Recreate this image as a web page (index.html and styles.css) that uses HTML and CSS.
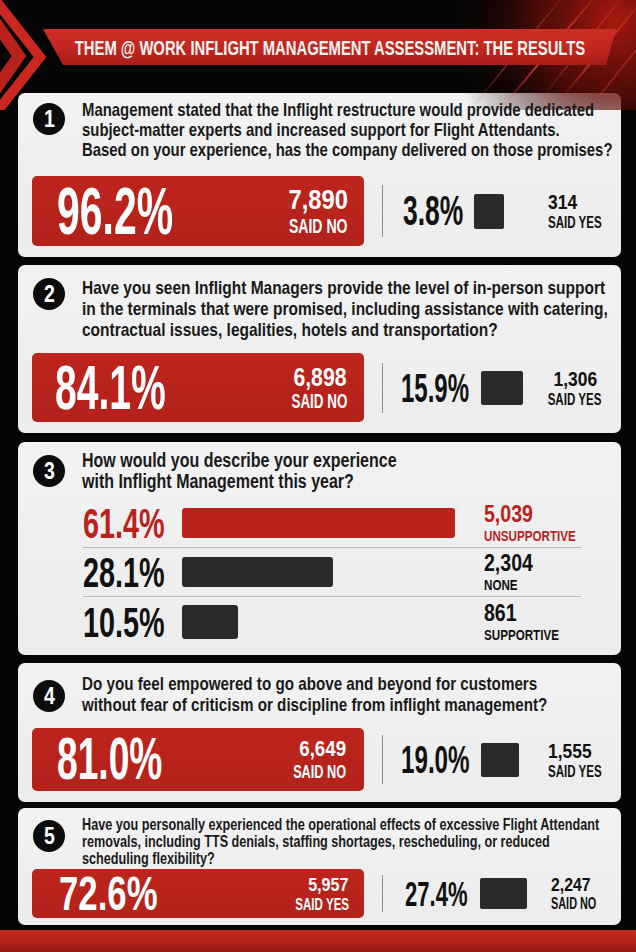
FILE: index.html
```html
<!DOCTYPE html>
<html lang="en">
<head>
<meta charset="utf-8">
<title>Them @ Work Inflight Management Assessment</title>
<link rel="stylesheet" href="styles.css">
</head>
<body>
<div class="page">
  <header class="hero">
    <svg class="decor" width="636" height="110" viewBox="0 0 636 110" aria-hidden="true">
      <defs>
        <radialGradient id="glow" cx="615" cy="20" r="170" gradientUnits="userSpaceOnUse">
          <stop offset="0" stop-color="#b01a10" stop-opacity="0.95"/>
          <stop offset="0.45" stop-color="#650d08" stop-opacity="0.75"/>
          <stop offset="1" stop-color="#000" stop-opacity="0"/>
        </radialGradient>
        <linearGradient id="streak" x1="0" y1="1" x2="1" y2="0">
          <stop offset="0" stop-color="#ff3a2a" stop-opacity="0"/>
          <stop offset="0.5" stop-color="#ff6050" stop-opacity="0.95"/>
          <stop offset="1" stop-color="#ff3a2a" stop-opacity="0.25"/>
        </linearGradient>
      </defs>
      <rect x="380" y="0" width="256" height="110" fill="url(#glow)"/>
      <line x1="560" y1="0" x2="470" y2="110" stroke="url(#streak)" stroke-width="1.5" opacity="0.6"/>
      <line x1="592" y1="0" x2="500" y2="110" stroke="url(#streak)" stroke-width="2" opacity="0.85"/>
      <line x1="620" y1="0" x2="540" y2="100" stroke="url(#streak)" stroke-width="1.2" opacity="0.75"/>
      <line x1="636" y1="8" x2="560" y2="100" stroke="url(#streak)" stroke-width="2.5" opacity="0.65"/>
      <line x1="636" y1="50" x2="600" y2="95" stroke="#ff4a38" stroke-width="1.2" opacity="0.5"/>
      <polyline points="-8,-4 40,57 -8,118" fill="none" stroke="#c9271f" stroke-width="10"/>
      <polyline points="-12,12 19,56 -12,100" fill="none" stroke="#b8221b" stroke-width="12"/>
    </svg>
    <div class="ribbon"><h1 class="title">THEM @ WORK INFLIGHT MANAGEMENT ASSESSMENT: THE RESULTS</h1></div>
  </header>

  <main class="cards">
    <section class="card c1">
      <div class="q">
        <span class="badge"><span>1</span></span>
        <p class="qt">Management stated that the Inflight restructure would provide dedicated<br>subject-matter experts and increased support for Flight Attendants.<br>Based on your experience, has the company delivered on those promises?</p>
      </div>
      <div class="result">
        <div class="major">
          <span class="bigwrap"><span class="big">96.2%</span></span>
          <div class="rcount"><b>7,890</b><small>SAID NO</small></div>
        </div>
        <div class="sepcol"><span class="sep"></span></div>
        <div class="minor"><span class="mpct">3.8%</span></div>
        <div class="sqcol"><span class="sq"></span></div>
        <div class="dcount"><b>314</b><small>SAID YES</small></div>
      </div>
    </section>

    <section class="card c2">
      <div class="q">
        <span class="badge"><span>2</span></span>
        <p class="qt">Have you seen Inflight Managers provide the level of in-person support<br>in the terminals that were promised, including assistance with catering,<br>contractual issues, legalities, hotels and transportation?</p>
      </div>
      <div class="result">
        <div class="major">
          <span class="bigwrap"><span class="big">84.1%</span></span>
          <div class="rcount"><b>6,898</b><small>SAID NO</small></div>
        </div>
        <div class="sepcol"><span class="sep"></span></div>
        <div class="minor"><span class="mpct">15.9%</span></div>
        <div class="sqcol"><span class="sq"></span></div>
        <div class="dcount"><b>1,306</b><small>SAID YES</small></div>
      </div>
    </section>

    <section class="card c3">
      <div class="q">
        <span class="badge"><span>3</span></span>
        <p class="qt">How would you describe your experience<br>with Inflight Management this year?</p>
      </div>
      <div class="rows">
        <div class="row red">
          <span class="rpct">61.4%</span>
          <span class="track"><span class="bar" style="width:273px"></span></span>
          <span class="rlabel"><b>5,039</b><small>UNSUPPORTIVE</small></span>
        </div>
        <div class="row">
          <span class="rpct">28.1%</span>
          <span class="track"><span class="bar" style="width:151px"></span></span>
          <span class="rlabel"><b>2,304</b><small>NONE</small></span>
        </div>
        <div class="row last">
          <span class="rpct">10.5%</span>
          <span class="track"><span class="bar tall" style="width:56px"></span></span>
          <span class="rlabel"><b>861</b><small>SUPPORTIVE</small></span>
        </div>
      </div>
    </section>

    <section class="card c4">
      <div class="q">
        <span class="badge"><span>4</span></span>
        <p class="qt">Do you feel empowered to go above and beyond for customers<br>without fear of criticism or discipline from inflight management?</p>
      </div>
      <div class="result">
        <div class="major">
          <span class="bigwrap"><span class="big">81.0%</span></span>
          <div class="rcount"><b>6,649</b><small>SAID NO</small></div>
        </div>
        <div class="sepcol"><span class="sep"></span></div>
        <div class="minor"><span class="mpct">19.0%</span></div>
        <div class="sqcol"><span class="sq"></span></div>
        <div class="dcount"><b>1,555</b><small>SAID YES</small></div>
      </div>
    </section>

    <section class="card c5">
      <div class="q">
        <span class="badge"><span>5</span></span>
        <p class="qt">Have you personally experienced the operational effects of excessive Flight Attendant<br>removals, including TTS denials, staffing shortages, rescheduling, or reduced<br>scheduling flexibility?</p>
      </div>
      <div class="result">
        <div class="major">
          <span class="bigwrap"><span class="big">72.6%</span></span>
          <div class="rcount"><b>5,957</b><small>SAID YES</small></div>
        </div>
        <div class="sepcol"><span class="sep"></span></div>
        <div class="minor"><span class="mpct">27.4%</span></div>
        <div class="sqcol"><span class="sq"></span></div>
        <div class="dcount"><b>2,247</b><small>SAID NO</small></div>
      </div>
    </section>
  </main>

  <footer class="band"></footer>
</div>
</body>
</html>
```

FILE: styles.css
```css
* { box-sizing: border-box; }

html, body {
  margin: 0;
  padding: 0;
  background: #050505;
}

body {
  width: 636px;
  height: 952px;
  overflow: hidden;
  font-family: "Liberation Sans", Arial, sans-serif;
  color: #161616;
}

.page {
  width: 636px;
  height: 952px;
  display: flex;
  flex-direction: column;
  background: #050505;
}

/* ---------- header ---------- */
.hero {
  position: relative;
  height: 93px;
  padding-top: 29px;
  flex-shrink: 0;
}

.decor {
  position: absolute;
  left: 0;
  top: 0;
  z-index: 0;
}

.ribbon {
  position: relative;
  z-index: 1;
  margin-left: 43px;
  width: 573px;
  height: 36px;
  background: linear-gradient(180deg, #cc2e25 0%, #c0261f 55%, #a91e18 100%);
  clip-path: polygon(0 0, 100% 0, calc(100% - 10px) 100%, 20px 100%);
  display: flex;
  align-items: center;
  justify-content: center;
}

.title {
  margin: 0;
  flex-shrink: 0;
  font-size: 21px;
  line-height: 1;
  font-weight: 700;
  color: #fbf3f0;
  white-space: nowrap;
  transform: scaleX(0.705);
  transform-origin: center center;
}

/* ---------- cards ---------- */
.cards {
  display: flex;
  flex-direction: column;
  padding: 0 15px 0 18px;
}

.card {
  background: linear-gradient(180deg, #f2f2f2 0%, #ececec 100%);
  border-radius: 7px;
  padding: 0 14px;
  display: flex;
  flex-direction: column;
}

.c1 { height: 164px; padding-top: 7px; padding-bottom: 11px; }
.c2 { height: 168px; padding-top: 12px; padding-bottom: 11px; margin-top: 8px; }
.c3 { height: 213px; padding-top: 8px; margin-top: 9px; }
.c4 { height: 139px; padding-top: 10px; padding-bottom: 11px; margin-top: 8px; }
.c5 { height: 117px; padding-top: 8px; padding-bottom: 7px; margin-top: 6px; }

.q {
  display: flex;
  align-items: flex-start;
  gap: 17px;
}

.badge {
  flex-shrink: 0;
  width: 32px;
  height: 32px;
  margin-left: 1px;
  border-radius: 50%;
  background: #0c0c0c;
  color: #fff;
  font-weight: 700;
  font-size: 23px;
  line-height: 32px;
  display: flex;
  justify-content: center;
}

.badge span {
  display: block;
  transform: scaleX(0.85);
}

.qt {
  flex: 1;
  min-width: 0;
  margin: 0;
  font-weight: 700;
  white-space: nowrap;
  color: #1a1a1a;
  transform: scaleX(0.82);
  transform-origin: left top;
}

.c1 .badge { margin-top: 3px; }
.c1 .qt { font-size: 18.5px; line-height: 20px; transform: scaleX(0.805); }

.c2 .badge { margin-top: 1px; }
.c2 .qt { font-size: 19px; line-height: 21px; transform: scaleX(0.815); }

.c3 .badge { margin-top: 5px; }
.c3 .qt { font-size: 19.5px; line-height: 21px; }

.c4 .badge { margin-top: 7px; }
.c4 .qt { font-size: 19px; line-height: 21px; transform: scaleX(0.8); }

.c5 .badge { margin-top: 4px; }
.c5 .qt { font-size: 16px; line-height: 17px; transform: scaleX(0.79); }

/* ---------- result row ---------- */
.result {
  margin-top: auto;
  display: grid;
  grid-template-columns: 332px 37px 73px 74px 1fr;
  align-items: center;
}

.major {
  height: 70px;
  background: linear-gradient(180deg, #bd251d 0%, #b3221b 100%);
  border-radius: 5px;
  display: flex;
  align-items: center;
  justify-content: space-between;
  padding: 0 16px 0 25px;
  color: #fff;
}

.c2 .major { height: 69px; padding-left: 23px; padding-right: 17px; }
.c4 .major { height: 63px; padding-right: 18px; }
.c5 .major { height: 49px; padding-left: 27px; padding-right: 15px; }

.bigwrap {
  width: 120px;
  white-space: nowrap;
  display: block;
}

.big {
  display: inline-block;
  font-weight: 700;
  font-size: 66px;
  line-height: 1;
  transform: scaleX(0.62);
  transform-origin: left center;
}

.c2 .big { font-size: 63px; }
.c4 .big { font-size: 59px; transform: scaleX(0.63); }
.c5 .big { font-size: 49px; transform: scaleX(0.71); }

.rcount {
  display: flex;
  flex-direction: column;
  align-items: flex-end;
  line-height: 1;
  white-space: nowrap;
}

.rcount b {
  font-size: 28px;
  font-weight: 700;
  transform: scaleX(0.85);
  transform-origin: right center;
}

.rcount small {
  font-size: 21px;
  font-weight: 700;
  margin-top: 1px;
  transform: scaleX(0.67);
  transform-origin: right center;
}

.c2 .rcount b { font-size: 25px; }
.c2 .rcount small { font-size: 20px; }
.c4 .rcount b { font-size: 22px; }
.c4 .rcount small { font-size: 19px; margin-top: 2px; }
.c5 .rcount b { font-size: 19px; }
.c5 .rcount small { font-size: 17px; margin-top: 2px; transform: scaleX(0.68); }

.sepcol {
  display: flex;
  justify-content: center;
}

.sep {
  width: 1px;
  height: 52px;
  background: #8e8e8e;
}

.c2 .sep { height: 50px; }
.c4 .sep { height: 49px; }
.c5 .sep { height: 37px; }

.minor {
  white-space: nowrap;
}

.mpct {
  display: inline-block;
  font-weight: 700;
  font-size: 42px;
  line-height: 1;
  color: #111;
  transform: scaleX(0.63);
  transform-origin: left center;
  margin-left: 2px;
}

.c2 .mpct { font-size: 40px; margin-left: 0; transform: scaleX(0.6); }
.c4 .mpct { font-size: 39px; margin-left: 0; transform: scaleX(0.62); }
.c5 .mpct { font-size: 35px; margin-left: 4px; transform: scaleX(0.63); }

.sqcol { display: flex; }

.sq {
  display: block;
  width: 30px;
  height: 35px;
  background: #2a2a2a;
  border-radius: 2px;
}

.c2 .sq { width: 42px; height: 34px; margin-left: 7px; }
.c4 .sq { width: 38px; height: 34px; margin-left: 7px; }
.c5 .sq { width: 47px; height: 31px; margin-left: 6px; }

.dcount {
  display: flex;
  flex-direction: column;
  align-items: flex-start;
  line-height: 1;
  color: #111;
  white-space: nowrap;
}

.dcount b {
  font-size: 21px;
  font-weight: 700;
  transform: scaleX(0.83);
  transform-origin: left center;
}

.dcount small {
  font-size: 17px;
  font-weight: 700;
  margin-top: 2px;
  transform: scaleX(0.68);
  transform-origin: left center;
}

.c2 .dcount { align-items: center; width: 54px; }
.c2 .dcount b, .c2 .dcount small { transform-origin: center center; }
.c5 .dcount { margin-left: 3px; }
.c5 .dcount b { font-size: 19px; }
.c5 .dcount small { font-size: 16px; }

/* ---------- card 3 rows ---------- */
.rows {
  margin-left: 51px;
  width: 498px;
  margin-top: 7px;
}

.row {
  display: grid;
  grid-template-columns: 99px 302px 97px;
  align-items: center;
  height: 49px;
  border-bottom: 1px solid #b8b8b8;
}

.row.last { border-bottom: 0; height: 50px; }

.rpct {
  display: block;
  font-weight: 700;
  font-size: 43px;
  line-height: 1;
  color: #111;
  white-space: nowrap;
  transform: scaleX(0.67);
  transform-origin: left center;
}

.row.red .rpct { color: #b9231c; }

.track { display: block; }

.bar {
  display: block;
  height: 30px;
  background: #2a2a2a;
  border-radius: 3px;
}

.bar.tall { height: 34px; }

.row.red .bar { background: #b9231c; }

.rlabel {
  display: flex;
  flex-direction: column;
  align-items: flex-start;
  line-height: 1;
  color: #111;
  white-space: nowrap;
}

.rlabel b {
  font-size: 23px;
  font-weight: 700;
  transform: scaleX(0.85);
  transform-origin: left center;
}

.rlabel small {
  font-size: 15.5px;
  font-weight: 700;
  margin-top: 2px;
  transform: scaleX(0.75);
  transform-origin: left center;
}

.row.red .rlabel { color: #b9231c; }

/* ---------- bottom band ---------- */
.band {
  margin-top: auto;
  height: 22px;
  background: linear-gradient(180deg, #c62b22 0%, #b2221b 60%, #8e1812 100%);
}
```
